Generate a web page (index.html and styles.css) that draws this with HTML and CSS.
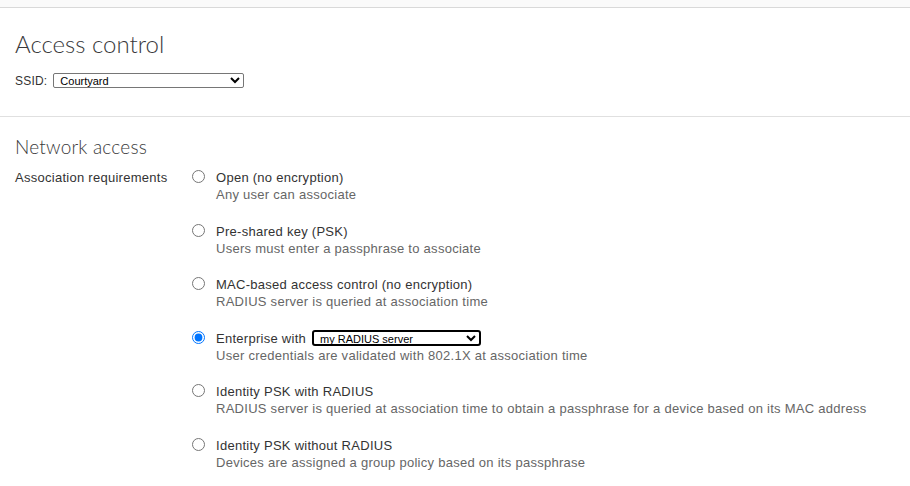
FILE: index.html
```html
<!DOCTYPE html>
<html lang="en">
<head>
    <meta charset="UTF-8">
    <meta name="viewport" content="width=device-width, initial-scale=1.0">
    <title>Access control</title>
    <link rel="stylesheet" href="styles.css">
</head>
<body>
    <div class="topbar"></div>

    <div class="section">
        <h1>Access control</h1>
        <div class="ssid-row">
            <label for="ssid">SSID:</label>
            <select id="ssid" class="ssid-select">
                <option>Courtyard</option>
            </select>
        </div>
    </div>

    <div class="section section-last">
        <h2>Network access</h2>
        <div class="form-row">
            <div class="row-label">Association requirements</div>
            <div class="options">
                <label class="option">
                    <input type="radio" name="assoc">
                    <span class="option-text">
                        <span class="option-title">Open (no encryption)</span>
                        <span class="option-desc">Any user can associate</span>
                    </span>
                </label>
                <label class="option">
                    <input type="radio" name="assoc">
                    <span class="option-text">
                        <span class="option-title">Pre-shared key (PSK)</span>
                        <span class="option-desc">Users must enter a passphrase to associate</span>
                    </span>
                </label>
                <label class="option">
                    <input type="radio" name="assoc">
                    <span class="option-text">
                        <span class="option-title">MAC-based access control (no encryption)</span>
                        <span class="option-desc">RADIUS server is queried at association time</span>
                    </span>
                </label>
                <label class="option">
                    <input type="radio" name="assoc" checked>
                    <span class="option-text">
                        <span class="option-title">Enterprise with
                            <select class="ent-select">
                                <option>my RADIUS server</option>
                            </select>
                        </span>
                        <span class="option-desc">User credentials are validated with 802.1X at association time</span>
                    </span>
                </label>
                <label class="option">
                    <input type="radio" name="assoc">
                    <span class="option-text">
                        <span class="option-title">Identity PSK with RADIUS</span>
                        <span class="option-desc">RADIUS server is queried at association time to obtain a passphrase for a device based on its MAC address</span>
                    </span>
                </label>
                <label class="option">
                    <input type="radio" name="assoc">
                    <span class="option-text">
                        <span class="option-title">Identity PSK without RADIUS</span>
                        <span class="option-desc">Devices are assigned a group policy based on its passphrase</span>
                    </span>
                </label>
            </div>
        </div>
    </div>
</body>
</html>
```

FILE: styles.css
```css
:root {
    --text-color: #333333;
    --muted-color: #666666;
    --heading-color: #39393b;
    --line-color: #e0e0e0;
}

* {
    box-sizing: border-box;
}

body {
    margin: 0;
    background-color: #ffffff;
    color: var(--text-color);
    font-family: "Liberation Sans", Arial, sans-serif;
    font-size: 13px;
}

.topbar {
    height: 8px;
    background-color: #fafafa;
    border-bottom: 1px solid #d9d9d9;
}

.section {
    padding: 22px 15px 28px;
    border-bottom: 1px solid var(--line-color);
}

.section-last {
    border-bottom: none;
    padding-top: 19px;
}

h1, h2 {
    margin: 0;
    font-family: Lato, "Liberation Sans", sans-serif;
    font-weight: 300;
    color: var(--heading-color);
}

h1 {
    margin-bottom: 15px;
    font-size: 24px;
    line-height: 28px;
}

h2 {
    margin-bottom: 11px;
    font-size: 19px;
    line-height: 22px;
    letter-spacing: 0.2px;
}

.ssid-row {
    display: flex;
    align-items: center;
    gap: 6px;
    font-size: 12px;
    letter-spacing: 0.2px;
}

select {
    font-family: "Liberation Sans", Arial, sans-serif;
    font-size: 11px;
    letter-spacing: 0;
    color: #000000;
    background-color: #ffffff;
}

.ssid-select {
    width: 191px;
    height: 15px;
    padding: 0 2px;
    border: 1px solid #767676;
    border-radius: 2px;
}

.form-row {
    display: flex;
    letter-spacing: 0.27px;
}

.row-label {
    width: 177px;
    line-height: 17px;
}

.options {
    display: flex;
    flex-direction: column;
    gap: 19.6px;
}

.option {
    display: flex;
    align-items: flex-start;
    gap: 11px;
}

.option input {
    width: 13px;
    height: 13px;
    margin: 1px 0 0;
}

.option-text {
    display: flex;
    flex-direction: column;
    line-height: 17px;
}

.option-title {
    display: flex;
    align-items: center;
    gap: 6px;
    height: 17px;
    color: var(--text-color);
}

.option-desc {
    color: var(--muted-color);
}

.ent-select {
    width: 169px;
    height: 16px;
    padding: 0 2px;
    border: 2px solid #000000;
    border-radius: 3px;
}
```
